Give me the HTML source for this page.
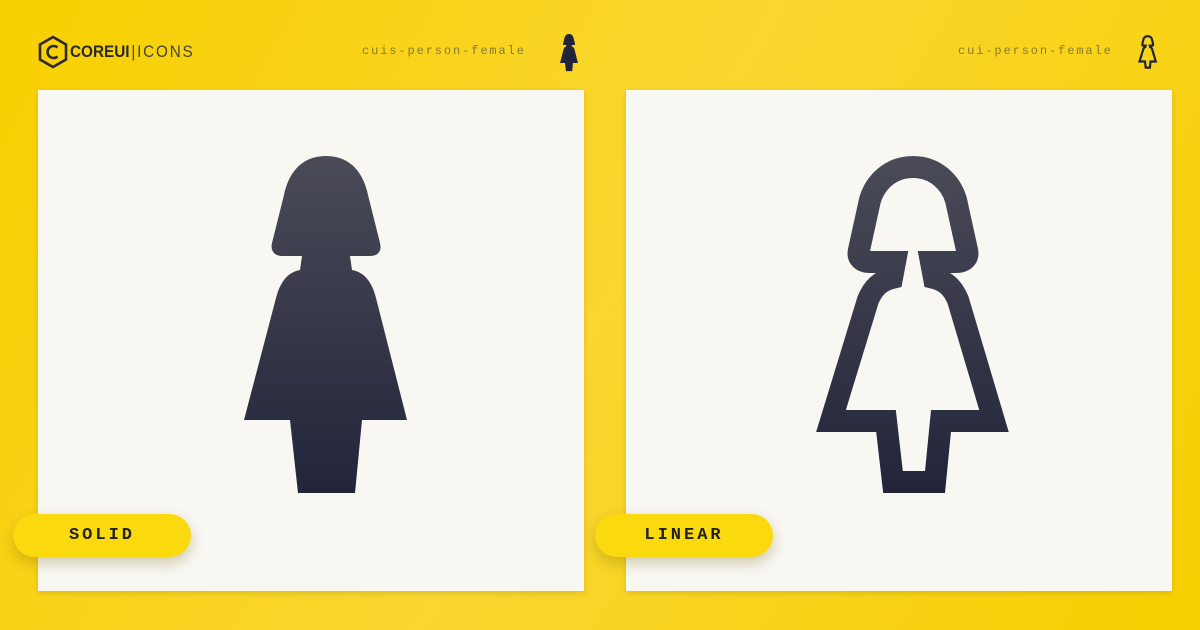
<!DOCTYPE html>
<html><head><style>
body{margin:0;width:1200px;height:630px;overflow:hidden;background:linear-gradient(120deg,#f8d000,#f9d630 50%,#f7d000);font-family:"Liberation Sans",sans-serif;position:relative}
.card{position:absolute;top:90px;width:546px;height:501px;background:#f8f7f2;box-shadow:0 2px 6px rgba(0,0,0,.12)}
.lbl{position:absolute;top:44px;font-family:"Liberation Mono",monospace;font-size:12px;letter-spacing:1.9px;color:#8d7a2a}
.badge{position:absolute;top:514px;width:178px;height:43px;border-radius:22px;background:#fad90e;box-shadow:0 6px 14px rgba(120,100,0,.3);text-align:center;line-height:43px;font-family:"Liberation Mono",monospace;font-weight:bold;font-size:17px;letter-spacing:3px;color:#222}
</style></head><body>
<svg style="position:absolute;left:37px;top:35px" width="32" height="34" viewBox="0 0 32 34"><path d="M16 2 L29 9.5 L29 24.5 L16 32 L3 24.5 L3 9.5 Z" fill="none" stroke="#2a2a33" stroke-width="2.6"/><path d="M20.5 12.5 A6 6 0 1 0 20.5 21.5" fill="none" stroke="#2a2a33" stroke-width="2.6"/></svg>
<div style="position:absolute;left:70px;top:42px;font-size:17px;font-weight:bold;color:#2a2a33;transform:scaleX(0.9);transform-origin:left">COREUI<span style="font-weight:normal;color:#444;letter-spacing:2px;margin-left:2px">|ICONS</span></div>
<div class="lbl" style="left:362px">cuis-person-female</div>
<div class="lbl" style="left:958px">cui-person-female</div>
<svg style="position:absolute;left:0;top:0" width="1200" height="630">
<path transform="translate(560,34) scale(0.11) translate(-244,-156)" d="M326,156 C300,156 288,175 284,195 L272,243 C270,251 275,256 282,256 L302,256 L300,270 C288,272 280,282 276,298 L244,420 L290,420 L298,493 L355,493 L362,420 L407,420 L376,298 C372,282 364,272 352,270 L350,256 L370,256 C378,256 382,251 380,243 L368,195 C364,175 352,156 326,156 Z" fill="#22243a"/>
<path transform="translate(1138,35) scale(0.1) translate(-816,-156)" d="M913,167 C890,167 875,183 870,200 L859,250 C857,258 862,262 870,262 L892,262 L889,276 C878,280 872,288 868,300 L831,421 L886,421 L893,482 L935,482 L941,421 L994,421 L958,300 C954,288 948,280 937,276 L934,262 L956,262 C964,262 969,258 967,250 L956,200 C951,183 936,167 913,167 Z" fill="none" stroke="#22243a" stroke-width="22"/>
</svg>
<div class="card" style="left:38px"></div>
<div class="card" style="left:626px"></div>
<svg style="position:absolute;left:0;top:0" width="1200" height="630">
<defs><linearGradient id="g2" x1="0" y1="156" x2="0" y2="493" gradientUnits="userSpaceOnUse"><stop offset="0" stop-color="#4a4b57"/><stop offset="1" stop-color="#22243a"/></linearGradient></defs>
<path d="M326,156 C300,156 288,175 284,195 L272,243 C270,251 275,256 282,256 L302,256 L300,270 C288,272 280,282 276,298 L244,420 L290,420 L298,493 L355,493 L362,420 L407,420 L376,298 C372,282 364,272 352,270 L350,256 L370,256 C378,256 382,251 380,243 L368,195 C364,175 352,156 326,156 Z" fill="url(#g2)"/>
<path d="M913,167 C890,167 875,183 870,200 L859,250 C857,258 862,262 870,262 L895,262 L892,278 C880,281 873,288 868,300 L831,421 L886,421 L893,482 L935,482 L941,421 L994,421 L958,300 C953,288 946,281 934,278 L931,262 L956,262 C964,262 969,258 967,250 L956,200 C951,183 936,167 913,167 Z" fill="none" stroke="url(#g2)" stroke-width="22"/>
</svg>
<div class="badge" style="left:13px">SOLID</div>
<div class="badge" style="left:595px">LINEAR</div>
</body></html>
